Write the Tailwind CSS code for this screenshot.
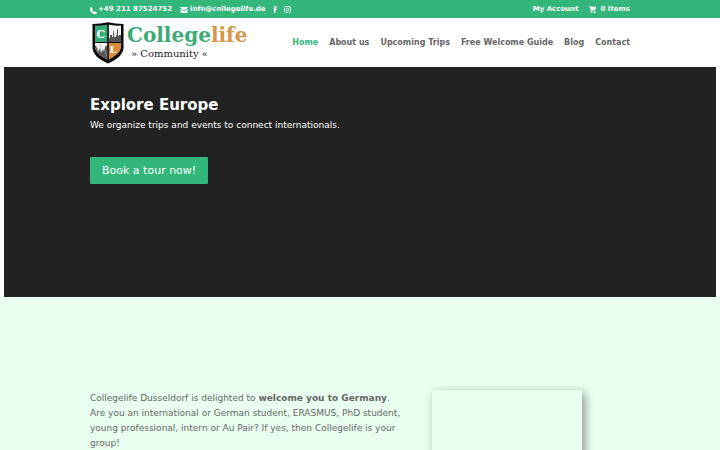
<!DOCTYPE html>
<html lang="en">
<head>
    <meta charset="UTF-8">
    <meta name="viewport" content="width=device-width, initial-scale=1.0">
    <title>Collegelife Community</title>
    <script src="https://cdn.jsdelivr.net/npm/@tailwindcss/browser@4"></script>
</head>
<body class="bg-white font-['DejaVu_Sans',sans-serif] text-[#666] overflow-x-hidden">
    <!-- Top bar -->
    <div class="bg-[#33b679] text-white text-[7px] font-bold">
        <div class="w-3/4 mx-auto h-[18px] pt-px flex items-center justify-between">
            <div class="flex items-center">
                <a href="tel:+4921187524752" class="flex items-center gap-px">
                    <svg class="size-[7px] mt-0.5" viewBox="0 0 16 16" fill="currentColor" aria-hidden="true">
                        <path d="M3.500 0 6.600 5 5 7c1 2 2.200 3.200 4.200 4.200l2-1.700L16 12.500c-.4 2.200-1.700 3.500-3.700 3.500C6 16 0 10 0 4.300 0 2 1.500.3 3.500 0z"/>
                    </svg>
                    <span>+49 211 87524752</span>
                </a>
                <a href="mailto:info@collegelife.de" class="flex items-center gap-0.5 ml-2">
                    <svg class="w-2 h-[6px]" viewBox="0 0 14 12" fill="currentColor" aria-hidden="true">
                        <path d="M0 0h14v2.200L7 6.500 0 2.200zM0 3.800l7 4.300 7-4.300V12H0z"/>
                    </svg>
                    <span>info@collegelife.de</span>
                </a>
                <a href="#" class="ml-[7px]" aria-label="Facebook">
                    <svg class="w-1 h-[7px]" viewBox="0 0 8 14" fill="currentColor">
                        <path d="M2 14V8H0V5.300h2V3.500C2 1.200 3.300 0 5.500 0H8v2.500H6.300c-.9 0-1.300.4-1.300 1.200v1.600h3L7.600 8H5v6z"/>
                    </svg>
                </a>
                <a href="#" class="ml-[7px]" aria-label="Instagram">
                    <svg class="size-[7px]" viewBox="0 0 14 14" fill="none" stroke="currentColor" stroke-width="1.600">
                        <rect x=".8" y=".8" width="12.400" height="12.400" rx="3"/>
                        <circle cx="7" cy="7" r="2.800"/>
                        <circle cx="10.700" cy="3.300" r=".3"/>
                    </svg>
                </a>
            </div>
            <div class="flex items-center gap-2.5">
                <a href="#">My Account</a>
                <a href="#" class="flex items-center gap-[5px]">
                    <svg class="size-[7px]" viewBox="0 0 14 14" fill="currentColor" aria-hidden="true">
                        <path d="M0 0h3l.5 1.500H14L12.500 8H4.800l.3 1.300h7.400v1.700H3.800L2 1.800H0z"/>
                        <circle cx="5" cy="12.300" r="1.700"/>
                        <circle cx="11.300" cy="12.300" r="1.700"/>
                    </svg>
                    <span>0 Items</span>
                </a>
            </div>
        </div>
    </div>

    <!-- Header -->
    <header class="bg-white">
        <div class="w-3/4 mx-auto h-[49px] flex items-center justify-between">
            <a href="#" class="flex items-start gap-[3px] pl-0.5 font-['DejaVu_Serif',serif]" aria-label="Collegelife Community">
                <svg class="w-8 h-[42px]" viewBox="0 0 32 42" aria-hidden="true">
                    <defs>
                        <clipPath id="shield">
                            <path d="M3 3.500Q10 4 16 2.500 22 4 29 3.500V26Q28 32 16 38 4 32 3 26z"/>
                        </clipPath>
                    </defs>
                    <path d="M.5 2Q9 2 16 .3 23 2 31.500 2V26Q31 35 16 41.500 1 35 .5 26z" fill="#080808"/>
                    <g clip-path="url(#shield)">
                        <path d="M0 0h15.500v20H0z" fill="#33ae76"/>
                        <path d="M16.500 0H32v20H16.500zM0 21h15.500v21H0z" fill="#f4f4f4"/>
                        <path d="M16.500 21H32v21H16.500z" fill="#d98c3d"/>
                        <path d="M17 20v-4h1v-3h2v2h1v-3l.5-5 .5 5v3h2v-2h1V8l.5-2 .5 2v6h1v-1h2v7z" fill="#555"/>
                        <path d="M3 35V23l2 3 1 4 2-4 1 5 2-4 1 3 1-5 2-2v15z" fill="#555"/>
                        <path d="M4 23l3 6M8 22l1 5M13 28l2 7" stroke="#aaa" stroke-width=".6"/>
                    </g>
                    <path d="M16 2v38M1 20.500h30" stroke="#080808" stroke-width="1.200"/>
                    <text x="9" y="16" text-anchor="middle" class="font-bold text-[11px]" fill="#fff">C</text>
                    <text x="21" y="31" text-anchor="middle" class="font-bold text-[10px]" fill="#fff">L</text>
                </svg>
                <span class="flex flex-col">
                    <span class="text-xl leading-[26px] font-bold text-[#3cab75]">College<span class="text-[#d99548]">life</span></span>
                    <span class="text-[10px] leading-3 pl-1 text-[#222]">» Community «</span>
                </span>
            </a>
            <nav class="flex gap-[11px] text-[8px] font-bold">
                <a href="#" class="text-[#33b679]">Home</a>
                <a href="#">About us</a>
                <a href="#">Upcoming Trips</a>
                <a href="#">Free Welcome Guide</a>
                <a href="#">Blog</a>
                <a href="#">Contact</a>
            </nav>
        </div>
    </header>

    <!-- Hero -->
    <section class="mx-1 bg-[#222] text-white min-h-[230px] pt-7">
        <div class="w-[540px] max-w-full mx-auto">
            <h1 class="text-[15px] leading-5 font-bold">Explore Europe</h1>
            <p class="text-[9px] leading-[15px] mt-[3px]">We organize trips and events to connect internationals.</p>
            <button type="button" class="mt-6 h-[27px] px-3 pt-px rounded-[1px] bg-[#33b679] text-[11px]">Book a tour now!</button>
        </div>
    </section>

    <!-- Welcome -->
    <section class="bg-[#e9ffef] h-[calc(100vh-297px)] overflow-hidden pt-[93px]">
        <div class="w-3/4 mx-auto flex justify-between">
            <p class="w-[314px] pt-px text-[9px] leading-[15px]">
                Collegelife Dusseldorf is delighted to <strong>welcome you to Germany</strong>.<br>
                Are you an international or German student, ERASMUS, PhD student, young professional, intern or Au Pair? If yes, then Collegelife is your group!
            </p>
            <div class="w-[150px] h-[150px] mr-12 shadow-[3px_3px_9px_rgba(0,0,0,0.4)]"></div>
        </div>
    </section>
</body>
</html>
